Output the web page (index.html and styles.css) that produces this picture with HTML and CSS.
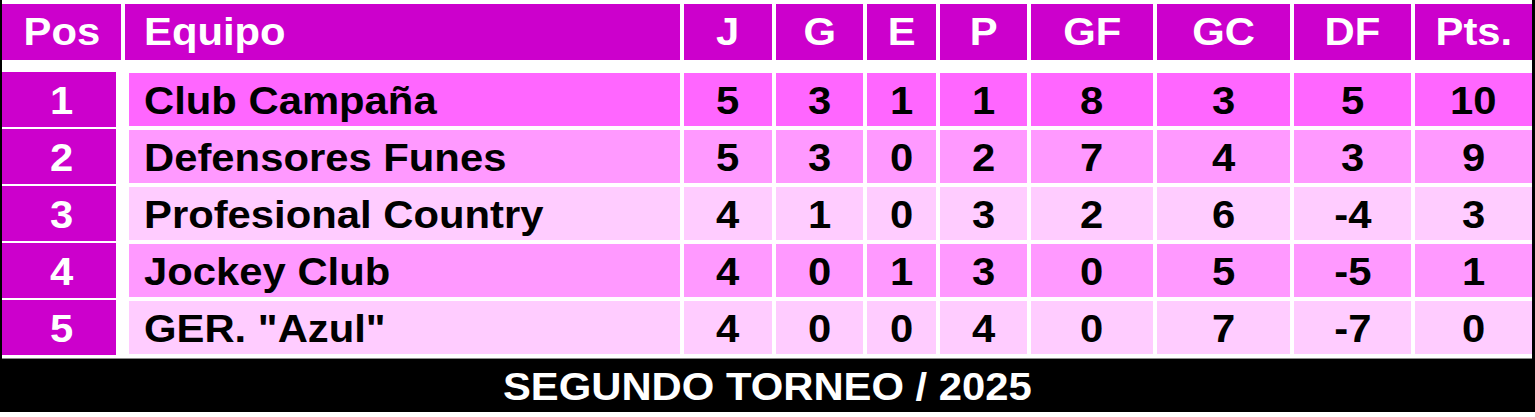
FILE: index.html
```html
<!DOCTYPE html>
<html lang="es">
<head>
<meta charset="utf-8">
<title>Tabla de posiciones</title>
<link rel="stylesheet" href="styles.css">
</head>
<body>
<div class="board">
  <div class="row head">
    <div class="cell pos"><span class="t">Pos</span></div>
    <div class="cell team"><span class="t">Equipo</span></div>
    <div class="cell"><span class="t">J</span></div>
    <div class="cell"><span class="t">G</span></div>
    <div class="cell"><span class="t">E</span></div>
    <div class="cell"><span class="t">P</span></div>
    <div class="cell"><span class="t">GF</span></div>
    <div class="cell"><span class="t">GC</span></div>
    <div class="cell"><span class="t">DF</span></div>
    <div class="cell"><span class="t">Pts.</span></div>
  </div>
  <div class="body">
    <div class="row r1">
      <div class="cell pos"><span class="t">1</span></div>
      <div class="cell team"><span class="t">Club Campaña</span></div>
      <div class="cell"><span class="t">5</span></div>
      <div class="cell"><span class="t">3</span></div>
      <div class="cell"><span class="t">1</span></div>
      <div class="cell"><span class="t">1</span></div>
      <div class="cell"><span class="t">8</span></div>
      <div class="cell"><span class="t">3</span></div>
      <div class="cell"><span class="t">5</span></div>
      <div class="cell"><span class="t">10</span></div>
    </div>
    <div class="row r2">
      <div class="cell pos"><span class="t">2</span></div>
      <div class="cell team"><span class="t">Defensores Funes</span></div>
      <div class="cell"><span class="t">5</span></div>
      <div class="cell"><span class="t">3</span></div>
      <div class="cell"><span class="t">0</span></div>
      <div class="cell"><span class="t">2</span></div>
      <div class="cell"><span class="t">7</span></div>
      <div class="cell"><span class="t">4</span></div>
      <div class="cell"><span class="t">3</span></div>
      <div class="cell"><span class="t">9</span></div>
    </div>
    <div class="row r3">
      <div class="cell pos"><span class="t">3</span></div>
      <div class="cell team"><span class="t">Profesional Country</span></div>
      <div class="cell"><span class="t">4</span></div>
      <div class="cell"><span class="t">1</span></div>
      <div class="cell"><span class="t">0</span></div>
      <div class="cell"><span class="t">3</span></div>
      <div class="cell"><span class="t">2</span></div>
      <div class="cell"><span class="t">6</span></div>
      <div class="cell"><span class="t">-4</span></div>
      <div class="cell"><span class="t">3</span></div>
    </div>
    <div class="row r2">
      <div class="cell pos"><span class="t">4</span></div>
      <div class="cell team"><span class="t">Jockey Club</span></div>
      <div class="cell"><span class="t">4</span></div>
      <div class="cell"><span class="t">0</span></div>
      <div class="cell"><span class="t">1</span></div>
      <div class="cell"><span class="t">3</span></div>
      <div class="cell"><span class="t">0</span></div>
      <div class="cell"><span class="t">5</span></div>
      <div class="cell"><span class="t">-5</span></div>
      <div class="cell"><span class="t">1</span></div>
    </div>
    <div class="row r3">
      <div class="cell pos"><span class="t">5</span></div>
      <div class="cell team"><span class="t">GER. "Azul"</span></div>
      <div class="cell"><span class="t">4</span></div>
      <div class="cell"><span class="t">0</span></div>
      <div class="cell"><span class="t">0</span></div>
      <div class="cell"><span class="t">4</span></div>
      <div class="cell"><span class="t">0</span></div>
      <div class="cell"><span class="t">7</span></div>
      <div class="cell"><span class="t">-7</span></div>
      <div class="cell"><span class="t">0</span></div>
    </div>
  </div>
  <div class="foot"><span class="t">SEGUNDO TORNEO / 2025</span></div>
</div>
</body>
</html>
```
FILE: styles.css
```css
* { box-sizing: border-box; }
html, body { margin: 0; padding: 0; background: #fff; }
body {
  width: 1535px;
  height: 417px;
  font-family: "Liberation Sans", Arial, sans-serif;
  font-weight: bold;
  font-size: 38px;
  overflow: hidden;
}
.board {
  width: 1535px;
  height: 412px;
  border-left: 2px solid #000;
  border-right: 3px solid #000;
  padding-top: 4px;
  display: flex;
  flex-direction: column;
}
.row {
  display: grid;
  grid-template-columns: 119px 555px 88px 87px 69px 87px 122px 133px 117px 117px;
  column-gap: 4px;
}
.head { height: 56px; }
.head .cell { background: #cc00cc; color: #fff; }
.cell {
  display: flex;
  align-items: center;
  justify-content: center;
  line-height: 1;
  white-space: nowrap;
}
.t {
  display: inline-block;
  transform: scaleX(1.1);
  transform-origin: center;
}
.team { justify-content: flex-start; }
.team .t { transform-origin: left center; }
.head .team { padding-left: 19px; }
.body {
  margin-top: 13px;
  display: flex;
  flex-direction: column;
  row-gap: 4px;
  padding-bottom: 4px;
  border-bottom: 1px solid #8a8a8a;
}
.body .row { height: 53px; }
.body .cell { padding-top: 3px; }
.body .pos {
  margin-right: 5px;
  padding-left: 5px;
  background: #cc00cc;
  color: #fff;
  margin-top: -1px;
  margin-bottom: -1px;
}
.body .team { margin-left: 4px; padding-left: 15px; }
.body .cell:not(.pos) { color: #000; }
.r1 .cell:not(.pos) { background: #ff66ff; }
.r2 .cell:not(.pos) { background: #ff99ff; }
.r3 .cell:not(.pos) { background: #ffccff; }
.foot {
  flex: 1;
  background: #000;
  color: #fff;
  display: flex;
  align-items: center;
  justify-content: center;
  line-height: 1;
  padding-top: 2px;
}
```
